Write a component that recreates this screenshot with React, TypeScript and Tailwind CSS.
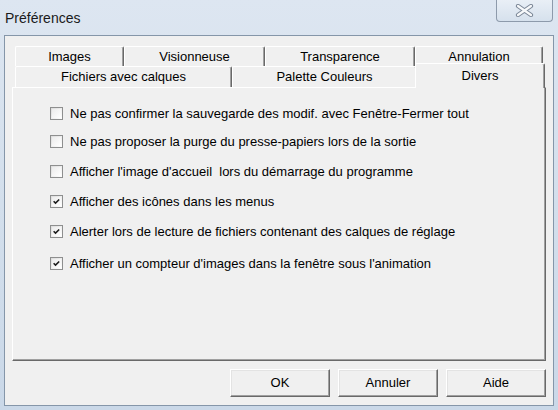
import React from "react";

const backTabs = [
  { label: "Images", w: "w-[109px]" },
  { label: "Visionneuse", w: "w-[141px]" },
  { label: "Transparence", w: "w-[150px]" },
  { label: "Annulation", w: "w-[128px]" },
];

const frontTabs = [
  { label: "Fichiers avec calques", w: "w-[217px]" },
  { label: "Palette Couleurs", w: "w-[185px]" },
];

const options = [
  { label: "Ne pas confirmer la sauvegarde des modif. avec Fenêtre-Fermer tout", checked: false, mt: "mt-0" },
  { label: "Ne pas proposer la purge du presse-papiers lors de la sortie", checked: false, mt: "mt-[15px]" },
  { label: "Afficher l'image d'accueil  lors du démarrage du programme", checked: false, mt: "mt-[17px]" },
  { label: "Afficher des icônes dans les menus", checked: true, mt: "mt-[17px]" },
  { label: "Alerter lors de lecture de fichiers contenant des calques de réglage", checked: true, mt: "mt-[17px]" },
  { label: "Afficher un compteur d'images dans la fenêtre sous l'animation", checked: true, mt: "mt-[19px]" },
];

function Tab({ label, w }: { label: string; w: string }) {
  return (
    <div
      className={`${w} h-full flex items-center justify-center border-t border-l border-r border-t-white border-l-white border-r-[#696969] rounded-t-[2px] bg-[#f0f0f0] shadow-[inset_-1px_0_0_#a0a0a0] text-[13px] text-black`}
    >
      {label}
    </div>
  );
}

function CheckBox({ checked }: { checked: boolean }) {
  return (
    <div className="w-[13px] h-[13px] shrink-0 border border-[#8e8f8f] bg-gradient-to-br from-[#dcdcdc] to-white p-px">
      <div className="w-full h-full bg-gradient-to-br from-[#ececec] to-white flex items-center justify-center">
        {checked && (
          <svg width="11" height="11" viewBox="0 0 11 11">
            <polyline
              points="2,5.2 4.3,7.5 8.8,3"
              fill="none"
              stroke="#1c1c1c"
              strokeWidth="1.9"
            />
          </svg>
        )}
      </div>
    </div>
  );
}

function Button({ label }: { label: string }) {
  return (
    <button className="w-[100px] h-[28px] bg-[#f0f0f0] border border-t-white border-l-white border-r-[#696969] border-b-[#696969] shadow-[inset_-1px_-1px_0_#a0a0a0,inset_1px_1px_0_#e3e3e3] text-[13px] text-black">
      {label}
    </button>
  );
}

export default function App() {
  return (
    <div className="w-[558px] h-[410px] flex flex-col bg-gradient-to-b from-[#dde6f1] via-[#d3dfec] to-[#cad8e8] font-['Liberation_Sans',Arial,sans-serif]">
      <div className="h-[35px] relative shrink-0">
        <span className="absolute left-[5px] top-[8px] text-[14px] text-[#1a1a1a]">Préférences</span>
        <div className="absolute left-[496px] top-0 w-[57px] h-[22px] rounded-b-[4px] border border-t-0 border-[#8d9aab] bg-gradient-to-b from-[#e9eff6] to-[#d6e1ed] flex items-center justify-center">
          <svg width="19" height="13" viewBox="0 0 19 13">
            <path d="M3 2 L16 11 M16 2 L3 11" stroke="#7b8797" strokeWidth="4.2" strokeLinecap="round" />
            <path d="M3 2 L16 11 M16 2 L3 11" stroke="#f7f9fb" strokeWidth="2.2" strokeLinecap="round" />
          </svg>
        </div>
      </div>

      <div className="mx-[4px] mb-[4px] flex-1 border border-[#8596a9] bg-[#f0f0f0] flex flex-col">
        <div className="ml-[7px] mt-[10px] w-[534px]">
          <div className="flex pl-[3px] h-[20px]">
            {backTabs.map((t) => (
              <Tab key={t.label} label={t.label} w={t.w} />
            ))}
          </div>
          <div className="flex pl-[3px] h-[21px] items-end">
            {frontTabs.map((t) => (
              <Tab key={t.label} label={t.label} w={t.w} />
            ))}
            <div className="relative z-10 w-[130px] h-[25px] -ml-[2px] -mb-px flex justify-center pt-[2px] border-t border-l border-r border-t-white border-l-white border-r-[#696969] rounded-t-[2px] bg-[#f0f0f0] shadow-[inset_-1px_0_0_#a0a0a0] text-[13px] text-black">
              Divers
            </div>
          </div>
          <div className="h-[274px] border border-t-white border-l-white border-r-[#696969] border-b-[#696969] shadow-[inset_-1px_-1px_0_#a0a0a0] pl-[37px] pt-[19px] flex flex-col">
            {options.map((o) => (
              <div key={o.label} className={`${o.mt} flex items-center h-[13px] gap-[7px] text-[13px] text-black whitespace-pre`}>
                <CheckBox checked={o.checked} />
                <span className="leading-[13px]">{o.label}</span>
              </div>
            ))}
          </div>
          <div className="flex justify-end gap-[8px] mt-[8px]">
            <Button label="OK" />
            <Button label="Annuler" />
            <Button label="Aide" />
          </div>
        </div>
      </div>
    </div>
  );
}
